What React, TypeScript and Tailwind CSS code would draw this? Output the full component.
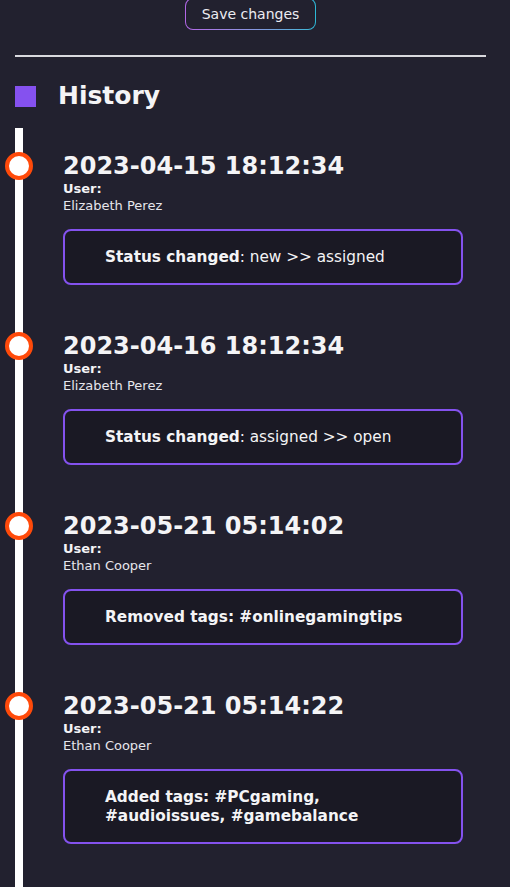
type Entry = {
  date: string;
  user: string;
  label: string;
  detail?: string;
  tags?: string;
};

const history: Entry[] = [
  { date: "2023-04-15 18:12:34", user: "Elizabeth Perez", label: "Status changed", detail: ": new >> assigned" },
  { date: "2023-04-16 18:12:34", user: "Elizabeth Perez", label: "Status changed", detail: ": assigned >> open" },
  { date: "2023-05-21 05:14:02", user: "Ethan Cooper", label: "Removed tags:", tags: "#onlinegamingtips" },
  { date: "2023-05-21 05:14:22", user: "Ethan Cooper", label: "Added tags:", tags: "#PCgaming, #audioissues, #gamebalance" },
];

export default function App() {
  return (
    <div className="min-h-screen overflow-hidden bg-[#22212f] pl-[15px] pr-[24px] text-[#f4f4f6] [font-family:'DejaVu_Sans',sans-serif]">
      <div className="-mt-[2px] flex justify-center">
        <div className="rounded-[8px] bg-gradient-to-r from-[#b266e6] to-[#2bb8d6] p-[1px]">
          <button className="h-[30px] rounded-[7px] bg-[#22212f] px-[16px] text-[14px] text-[#ececf2]" type="button">
            Save changes
          </button>
        </div>
      </div>

      <div className="mt-[25px] h-[2px] bg-[#d9d9de]" />

      <div className="mt-[23px] flex h-[32px] items-center gap-[22px]">
        <span className="h-[21px] w-[21px] bg-[#8551ef]" />
        <h2 className="text-[25px] font-bold leading-[32px]">History</h2>
      </div>

      <div className="mt-[16px] border-l-[8px] border-white pt-[25px]">
        {history.map((item) => (
          <HistoryItem key={item.date} item={item} />
        ))}
      </div>
    </div>
  );
}

function HistoryItem({ item }: { item: Entry }) {
  return (
    <div className="relative pb-[48px] pl-[40px]">
      <span className="absolute -left-[18px] -top-[1px] h-[28px] w-[28px] rounded-full border-[4px] border-[#ff4a0a] bg-white" />
      <p className="text-[24px] font-bold leading-[27px]">{item.date}</p>
      <p className="text-[13px] font-bold leading-[17px]">User:</p>
      <p className="text-[13px] leading-[17px] text-[#e6e6ec]">{item.user}</p>
      <div className="mt-[15px] w-[400px] rounded-[8px] border-2 border-[#8452ee] bg-[#1a1924] px-[40px] pb-[16px] pt-[17px] text-[15.3px] leading-[19px]">
        {item.detail ? (
          <p>
            <span className="font-bold">{item.label}</span>
            {item.detail}
          </p>
        ) : (
          <p className="font-bold">
            {item.label} {item.tags}
          </p>
        )}
      </div>
    </div>
  );
}
